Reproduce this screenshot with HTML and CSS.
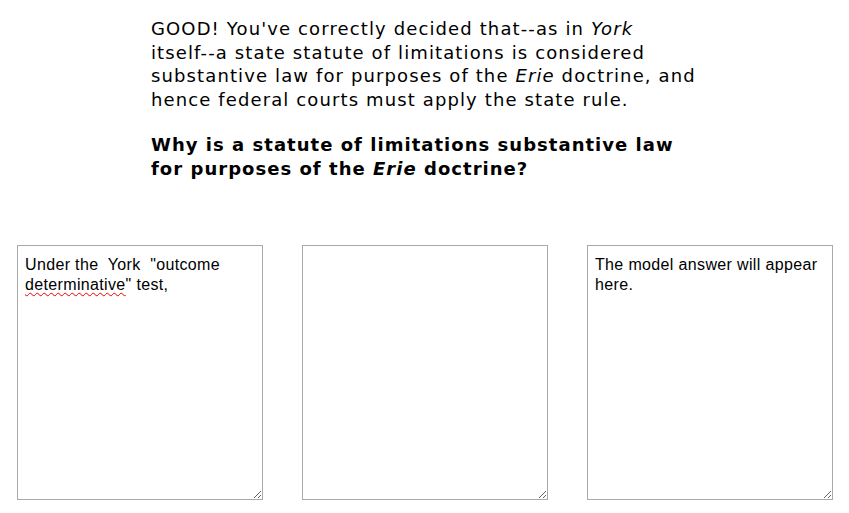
FILE: index.html
```html
<!DOCTYPE html>
<html>
<head>
<meta charset="utf-8">
<link rel="stylesheet" href="styles.css">
</head>
<body>
<div class="intro">
  <p class="feedback">GOOD! You've correctly decided <span class="nowrap">that--as</span> in <em>York</em> <span class="nowrap">itself--a</span> state statute of limitations is considered substantive law for purposes of the <em>Erie</em> doctrine, and hence federal courts must apply the state rule.</p>
  <p class="question">Why is a statute of limitations substantive law for purposes of the <em>Erie</em> doctrine?</p>
</div>
<div class="boxes">
  <div class="box" contenteditable="true" spellcheck="true">Under the&nbsp; York&nbsp; "outcome <span class="misspelt">determinative</span>" test,</div>
  <div class="box" contenteditable="true"></div>
  <div class="box">The model answer will appear here.</div>
</div>
</body>
</html>
```
FILE: styles.css
```css
html, body {
  margin: 0;
  padding: 0;
  background: #fff;
}
body {
  font-family: "DejaVu Sans", Verdana, sans-serif;
  color: #000;
}
.intro {
  width: 547px;
  margin: 0 auto;
  padding-top: 17px;
  height: 228px;
  box-sizing: border-box;
}
.feedback {
  margin: 0;
  font-size: 18px;
  line-height: 23.5px;
  letter-spacing: 1.12px;
}
.nowrap {
  white-space: nowrap;
}
.question {
  margin: 22px 0 0;
  font-size: 18px;
  line-height: 23.5px;
  font-weight: bold;
  letter-spacing: 1.03px;
}
.boxes {
  display: flex;
  gap: 39px;
  padding-left: 17px;
  padding-top: 17px;
}
.box {
  width: 246px;
  height: 255px;
  box-sizing: border-box;
  border: 1px solid #a9a9a9;
  padding: 9px 7px;
  font-family: "Liberation Sans", Tahoma, sans-serif;
  font-size: 16px;
  line-height: 20px;
  letter-spacing: 0.35px;
  resize: both;
  overflow: auto;
  outline: none;
}
.misspelt {
  text-decoration: underline wavy #e00;
  text-decoration-thickness: 1px;
  text-underline-offset: 2px;
}
```
